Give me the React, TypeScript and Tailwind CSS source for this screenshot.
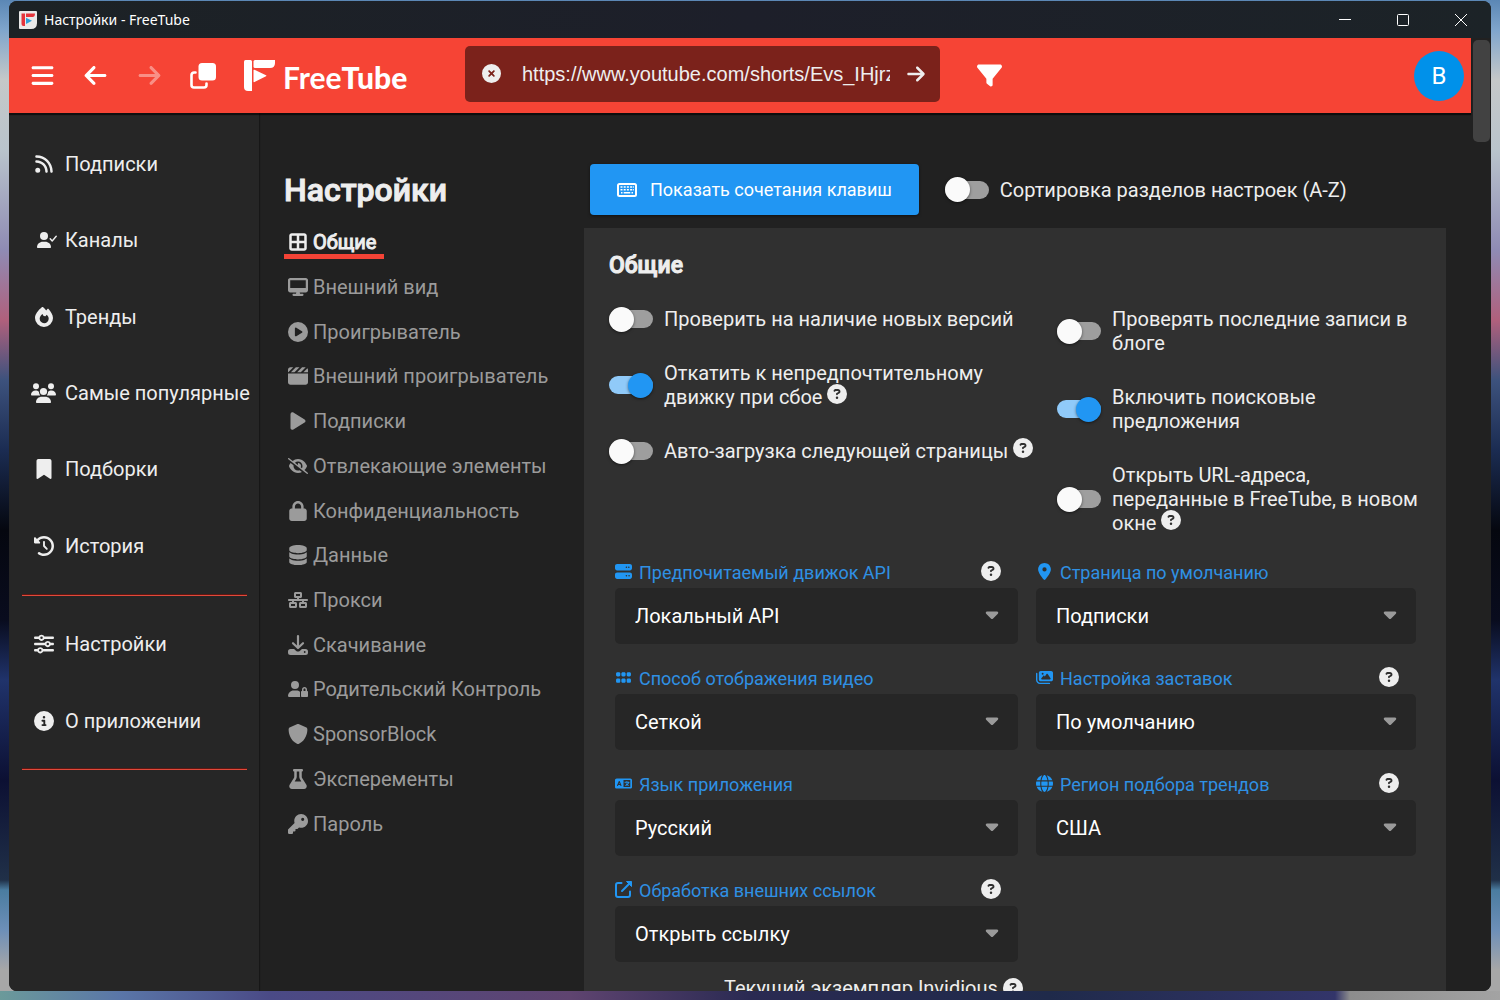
import { useState, type ReactNode } from "react";
import type { IconType } from "react-icons";
import {
  FaArrowLeft,
  FaArrowRight,
  FaBars,
  FaBookmark,
  FaBorderAll,
  FaCaretDown,
  FaCircleInfo,
  FaCirclePlay,
  FaCircleQuestion,
  FaCircleXmark,
  FaClapperboard,
  FaClockRotateLeft,
  FaDatabase,
  FaDesktop,
  FaEyeSlash,
  FaFilter,
  FaFlask,
  FaGlobe,
  FaGrip,
  FaImages,
  FaKey,
  FaLanguage,
  FaLocationDot,
  FaLock,
  FaNetworkWired,
  FaPlay,
  FaRss,
  FaServer,
  FaShield,
  FaSliders,
  FaUserLock,
} from "react-icons/fa6";

type IconProps = { className?: string };
type Icon = IconType | ((props: IconProps) => ReactNode);

function UserCheckIcon({ className }: IconProps) {
  return (
    <svg viewBox="0 0 20 16" className={className} fill="currentColor">
      <circle cx="7" cy="4" r="4" />
      <path d="M0 15.2C0 12 2.700 9.700 5.800 9.700h2.400c3.100 0 5.800 2.300 5.800 5.500 0 .5-.3.800-.8.800H.8c-.5 0-.8-.3-.8-.8z" />
      <path
        d="M13.200 6.800l2 2.200 4-4.700"
        fill="none"
        stroke="currentColor"
        strokeWidth="1.400"
        strokeLinecap="round"
        strokeLinejoin="round"
      />
    </svg>
  );
}

function FireIcon({ className }: IconProps) {
  return (
    <svg viewBox="0 0 18 20" className={className} fill="currentColor">
      <path
        fillRule="evenodd"
        d="M6.800.3c.4-.4 1-.4 1.400 0 1.100 1 2.100 2.100 3 3.300l1.200-1.500c.3-.4.9-.4 1.200 0C15.600 4.500 18 7.800 18 11a9 9 0 0 1-18 0C0 7.200 3.300 3.200 6.800.3zM4.700 11.500a4.500 4.500 0 0 0 9 .3c0-1.600-.8-3-2.200-4-.2.900-.7 1.500-1.600 1.500-1.200 0-2-1-2.200-2.300-1.600.9-3 2.700-3 4.500z"
      />
    </svg>
  );
}

function UsersIcon({ className }: IconProps) {
  return (
    <svg viewBox="0 0 25 20" className={className} fill="currentColor">
      <circle cx="5" cy="3.200" r="3" />
      <circle cx="20" cy="3.200" r="3" />
      <circle cx="12.500" cy="8.500" r="3.600" />
      <path d="M0 11.800C0 9.200 2 7.500 4.500 7.500c1.400 0 2.600.4 3.400 1.200.1 1.500.5 2.700 1.300 3.800H.8c-.5 0-.8-.2-.8-.7zM25 11.800c0-2.600-2-4.300-4.500-4.300-1.400 0-2.600.4-3.400 1.200-.1 1.500-.5 2.700-1.300 3.800h8.400c.5 0 .8-.2.800-.7z" />
      <path d="M5 19.200c0-3.300 2.700-5.400 5.700-5.400h3.600c3 0 5.700 2.100 5.700 5.400 0 .5-.3.800-.8.800H5.800c-.5 0-.8-.3-.8-.8z" />
    </svg>
  );
}

function CloneIcon({ className }: IconProps) {
  return (
    <svg viewBox="0 0 26 26" className={className} fill="currentColor">
      <rect x="8.500" y="0" width="17.500" height="17.500" rx="3.500" />
      <path
        d="M5.500 9.500H4a2.500 2.500 0 0 0-2.500 2.500v10A2.500 2.500 0 0 0 4 24.500h10a2.500 2.500 0 0 0 2.500-2.500v-1.500"
        fill="none"
        stroke="currentColor"
        strokeWidth="2.600"
        strokeLinecap="round"
      />
    </svg>
  );
}

function KeyboardIcon({ className }: IconProps) {
  return (
    <svg viewBox="0 0 20 20" className={className} fill="none" stroke="currentColor">
      <rect x="1" y="4" width="18" height="12" rx="1.500" strokeWidth="2" />
      <path d="M3.500 7h2m1.200 0h2m1.200 0h2m1.200 0h2m.7 0h1" strokeWidth="1.600" />
      <path d="M3.500 9.800h2m1.200 0h2m1.200 0h2m1.200 0h2m.7 0h1" strokeWidth="1.600" />
      <path d="M4 12.800h1.500m1.200 0h6.600m1.200 0H16" strokeWidth="1.600" />
    </svg>
  );
}

function DownloadIcon({ className }: IconProps) {
  return (
    <svg viewBox="0 0 20 20" className={className} fill="currentColor">
      <path
        d="M10 1.100v11.400M5 8.200l5 4.800 5-4.800"
        fill="none"
        stroke="currentColor"
        strokeWidth="2.200"
        strokeLinecap="round"
        strokeLinejoin="round"
      />
      <path
        fillRule="evenodd"
        d="M2.500 14h3.600l2.100 1.900c1 .9 2.600.9 3.600 0l2.100-1.900h3.600a2.500 2.500 0 0 1 2.500 2.500v1a2.500 2.500 0 0 1-2.500 2.500h-15A2.500 2.500 0 0 1 0 17.500v-1A2.500 2.500 0 0 1 2.500 14zm14.200 2.100a.9.9 0 1 0 0 1.800.9.9 0 0 0 0-1.800z"
      />
    </svg>
  );
}

function ExternalLinkIcon({ className }: IconProps) {
  return (
    <svg viewBox="0 0 17 17" className={className} fill="none" stroke="currentColor">
      <path
        d="M6.500 2H3a2 2 0 0 0-2 2v10a2 2 0 0 0 2 2h10a2 2 0 0 0 2-2v-3.500"
        strokeWidth="2"
        strokeLinecap="round"
      />
      <path d="M7 10l7-7" strokeWidth="2" strokeLinecap="round" />
      <path d="M11.500.500h5v5z" fill="currentColor" strokeLinejoin="round" />
    </svg>
  );
}

function LogoMark({ className }: IconProps) {
  return (
    <svg viewBox="0 0 31 31" className={className} fill="currentColor">
      <path d="M1.500 0H6.500Q8 0 8 1.500V31H4Q0 31 0 27V1.500Q0 0 1.500 0z" />
      <path d="M11 0h20v3q0 5-5 5H11Q9.500 8 9.500 6.500v-5Q9.500 0 11 0z" />
      <path d="M9.500 10.300q0-1 1-.5l11.500 5.500q.900.500 0 1L10.500 22q-1 .5-1-.5z" />
    </svg>
  );
}

function AppIcon() {
  return (
    <svg viewBox="0 0 18 18" className="size-[18px]">
      <path d="M1 0h16q1 0 1 1v11q0 6-6 6H1q-1 0-1-1V1q0-1 1-1z" fill="#e9e9e9" />
      <path d="M2.500 2.500H6V15H4.500q-2 0-2-2zM7 2.500h9q0 3.500-2.500 3.500H7z" fill="#e5343b" />
      <path d="M7 6.800l6 3L7 13z" fill="#2f9fd8" />
    </svg>
  );
}

const navItems: { icon: Icon; label: string; size: string }[] = [
  { icon: FaRss, label: "Подписки", size: "size-5" },
  { icon: UserCheckIcon, label: "Каналы", size: "ml-[6px] w-5 h-4" },
  { icon: FireIcon, label: "Тренды", size: "w-[18px] h-5" },
  { icon: UsersIcon, label: "Самые популярные", size: "w-[25px] h-5" },
  { icon: FaBookmark, label: "Подборки", size: "size-5" },
  { icon: FaClockRotateLeft, label: "История", size: "size-5" },
];

const navFooterItems: { icon: Icon; label: string; size: string }[] = [
  { icon: FaSliders, label: "Настройки", size: "size-5" },
  { icon: FaCircleInfo, label: "О приложении", size: "size-5" },
];

const sections: { icon: Icon; label: string }[] = [
  { icon: FaBorderAll, label: "Общие" },
  { icon: FaDesktop, label: "Внешний вид" },
  { icon: FaCirclePlay, label: "Проигрыватель" },
  { icon: FaClapperboard, label: "Внешний проигрыватель" },
  { icon: FaPlay, label: "Подписки" },
  { icon: FaEyeSlash, label: "Отвлекающие элементы" },
  { icon: FaLock, label: "Конфиденциальность" },
  { icon: FaDatabase, label: "Данные" },
  { icon: FaNetworkWired, label: "Прокси" },
  { icon: DownloadIcon, label: "Скачивание" },
  { icon: FaUserLock, label: "Родительский Контроль" },
  { icon: FaShield, label: "SponsorBlock" },
  { icon: FaFlask, label: "Эксперементы" },
  { icon: FaKey, label: "Пароль" },
];

type Toggle = { label: string; on?: boolean; help?: boolean };

const leftToggles: Toggle[] = [
  { label: "Проверить на наличие новых версий" },
  { label: "Откатить к непредпочтительному движку при сбое", on: true, help: true },
  { label: "Авто-загрузка следующей страницы", help: true },
];

const rightToggles: Toggle[] = [
  { label: "Проверять последние записи в блоге" },
  { label: "Включить поисковые предложения", on: true },
  { label: "Открыть URL-адреса, переданные в FreeTube, в новом окне", help: true },
];

const selects: { id: string; icon: Icon; label: string; value: string; help?: boolean }[] = [
  { id: "backend", icon: FaServer, label: "Предпочитаемый движок API", value: "Локальный API", help: true },
  { id: "landing", icon: FaLocationDot, label: "Страница по умолчанию", value: "Подписки" },
  { id: "view", icon: FaGrip, label: "Способ отображения видео", value: "Сеткой" },
  { id: "thumbs", icon: FaImages, label: "Настройка заставок", value: "По умолчанию", help: true },
  { id: "locale", icon: FaLanguage, label: "Язык приложения", value: "Русский" },
  { id: "region", icon: FaGlobe, label: "Регион подбора трендов", value: "США", help: true },
  { id: "links", icon: ExternalLinkIcon, label: "Обработка внешних ссылок", value: "Открыть ссылку", help: true },
];

function HelpButton() {
  return (
    <button type="button" aria-label="Подсказка" className="block text-[#eeeeee]">
      <FaCircleQuestion className="size-5" />
    </button>
  );
}

function Switch({ label, on = false, help }: Toggle) {
  const [checked, setChecked] = useState(on);

  return (
    <label className="flex items-center gap-[11px]">
      <input
        type="checkbox"
        className="peer sr-only"
        checked={checked}
        onChange={(e) => setChecked(e.target.checked)}
      />
      <span
        className={`flex h-[18px] w-11 shrink-0 items-center rounded-full ${
          checked ? "justify-end bg-[#90caf9]" : "justify-start bg-[#9e9e9e]"
        }`}
      >
        <span
          className={`size-[25px] shrink-0 rounded-full shadow-[0_1px_3px_rgba(0,0,0,0.5)] ${
            checked ? "bg-[#2196f3]" : "bg-[#fafafa]"
          }`}
        />
      </span>
      <span className="leading-6">
        {label}
        {help && (
          <>
            {" "}
            <span className="inline-flex h-4 items-center align-baseline">
              <HelpButton />
            </span>
          </>
        )}
      </span>
    </label>
  );
}

function SelectField({ id, icon: Icon, label, value, help }: (typeof selects)[number]) {
  return (
    <div>
      <div className="flex h-[30px] items-center justify-between pr-[17px]">
        <label htmlFor={id} className="flex items-center gap-[7px] text-lg leading-6 text-[#2f90e4]">
          <Icon className="mb-1 size-[17px] shrink-0 text-[#2196f3]" />
          {label}
        </label>
        {help && (
          <span className="mb-1">
            <HelpButton />
          </span>
        )}
      </div>
      <div className="relative">
        <select
          id={id}
          className="h-14 w-full appearance-none rounded-[5px] bg-[#262626] px-5 text-xl text-white outline-none"
        >
          <option>{value}</option>
        </select>
        <FaCaretDown className="pointer-events-none absolute top-4 right-4 size-5 text-[#9a9a9a]" />
      </div>
    </div>
  );
}

function NavLink({ icon: Icon, label, size }: (typeof navItems)[number]) {
  return (
    <a href="#" className="flex items-center gap-[9px] pl-[22px] whitespace-nowrap">
      <span className="flex w-[25px] shrink-0 justify-center">
        <Icon className={`shrink-0 ${size}`} />
      </span>
      {label}
    </a>
  );
}

function TitleBar() {
  return (
    <div className="flex h-[37px] shrink-0 items-center justify-between bg-gradient-to-r from-[#1c2225] via-[#1d1f2a] to-[#1c2327] pr-6 pl-[10px]">
      <div className="flex items-center gap-[7px] font-['Noto_Sans',sans-serif] text-sm text-white">
        <AppIcon />
        Настройки - FreeTube
      </div>
      <div className="flex gap-[46px] text-white">
        <button type="button" aria-label="Свернуть">
          <svg viewBox="0 0 12 12" className="size-3" fill="none" stroke="currentColor">
            <path d="M0 5.500h12" />
          </svg>
        </button>
        <button type="button" aria-label="Развернуть">
          <svg viewBox="0 0 12 12" className="size-3" fill="none" stroke="currentColor">
            <rect x=".5" y=".5" width="11" height="11" rx="1" />
          </svg>
        </button>
        <button type="button" aria-label="Закрыть">
          <svg viewBox="0 0 12 12" className="size-3" fill="none" stroke="currentColor">
            <path d="M0 0l12 12M12 0L0 12" />
          </svg>
        </button>
      </div>
    </div>
  );
}

function TopBar() {
  return (
    <header className="z-10 flex h-[75px] shrink-0 items-center bg-[#f64435] text-white shadow-[0_2px_1px_rgba(0,0,0,0.6)]">
      <div className="flex grow-[436] basis-0 items-center pl-5">
        <button type="button" aria-label="Меню" className="flex w-[26px] justify-center">
          <FaBars className="size-[25px]" />
        </button>
        <button type="button" aria-label="Назад" className="ml-[27px] flex w-[26px] justify-center">
          <FaArrowLeft className="size-[25px]" />
        </button>
        <button type="button" aria-label="Вперёд" className="ml-7 flex w-[26px] justify-center opacity-40">
          <FaArrowRight className="size-[25px]" />
        </button>
        <button type="button" aria-label="Новое окно" className="ml-7 flex w-[26px] justify-center">
          <CloneIcon className="size-[26px]" />
        </button>
        <a href="#" className="ml-7 flex items-center gap-2">
          <LogoMark className="size-[31px]" />
          <span className="pt-[2px] font-['Lato',sans-serif] text-[30px] leading-8 font-bold">
            Free<span className="font-black">Tube</span>
          </span>
        </a>
      </div>
      <div className="w-[475px] self-start pt-2">
        <div className="flex h-14 items-center rounded-[5px] bg-[#7b221b] pr-[14px] pb-px pl-[17px] text-[#eeeeee]">
          <button type="button" aria-label="Очистить">
            <FaCircleXmark className="size-[19px]" />
          </button>
          <input
            type="text"
            aria-label="Поиск"
            defaultValue="https://www.youtube.com/shorts/Evs_IHjrzK0"
            className="ml-[21px] min-w-0 flex-1 bg-transparent font-['Liberation_Sans',Arial,sans-serif] text-xl outline-none"
          />
          <button type="button" aria-label="Искать" className="ml-4">
            <FaArrowRight className="size-5" />
          </button>
        </div>
      </div>
      <div className="flex grow-[487] basis-0 items-center justify-between pr-[7px] pl-[37px]">
        <button type="button" aria-label="Фильтры">
          <FaFilter className="size-[25px]" />
        </button>
        <button
          type="button"
          aria-label="Профиль"
          className="size-[50px] rounded-full bg-[#0091ea] text-2xl leading-none"
        >
          B
        </button>
      </div>
    </header>
  );
}

export default function App() {
  return (
    <div className="h-screen [background:linear-gradient(to_right,#6b9a9a_0%,#5a76a8_8%,#4a4a86_18%,#5f4470_38%,#2a2a52_50%,#1f2a4a_70%,#33356a_89%,#8d8d8d_90%,#a3a3a3_100%)_bottom/100%_9px_no-repeat,linear-gradient(to_bottom,#5b87b5_0%,#7fa5cc_3%,#c5c8c8_8%,#b9c4cc_15%,#8f8bb4_25%,#b0607c_32%,#3d527d_38%,#1b2c52_45%,#05070f_53%,#090c1e_62%,#20336b_68%,#0c1033_78%,#203048_88%,#4a7ca0_89%,#6d8fb8_93%,#a7a7a7_97%,#a7a7a7_100%)] px-[9px] pt-px pb-[9px] font-['Roboto',sans-serif] text-xl text-[#eeeeee]">
      <div className="flex h-full flex-col overflow-hidden rounded-lg bg-[#212121]">
        <TitleBar />
        <div className="flex min-h-0 flex-1">
          <div className="flex min-w-0 flex-1 flex-col">
            <TopBar />
            <div className="flex min-h-0 flex-1">
              <nav className="w-[250px] shrink-0 bg-[#262626] pt-[13px] shadow-[1px_0_1px_rgba(0,0,0,0.3)]">
                <div className="grid h-[458px] auto-rows-fr">
                  {navItems.map((item) => (
                    <NavLink key={item.label} {...item} />
                  ))}
                </div>
                <hr className="mt-[10px] mr-3 mb-[10px] ml-[13px] h-[2px] border-t border-[#5e1712] bg-[#e0493a]" />
                <div className="grid h-[153px] auto-rows-fr">
                  {navFooterItems.map((item) => (
                    <NavLink key={item.label} {...item} />
                  ))}
                </div>
                <hr className="mt-[9px] mr-3 ml-[13px] h-[2px] border-t border-[#5e1712] bg-[#e0493a]" />
              </nav>

              <main className="flex min-w-0 flex-1 overflow-hidden px-[25px] pt-[51px]">
                <aside className="w-[300px] shrink-0">
                  <h1 className="text-[32px] leading-[52px] font-medium [-webkit-text-stroke:1px]">Настройки</h1>
                  <ul className="mt-1 grid h-[626px] auto-rows-fr">
                    {sections.map(({ icon: Icon, label }, i) => (
                      <li key={label} className="flex items-center">
                        <a
                          href="#"
                          className={`flex items-center gap-[5px] border-b-[5px] pt-[5px] pr-2 pl-1 ${
                            i === 0
                              ? "border-[#f44336] text-[#eeeeee]"
                              : "border-transparent text-[#9b9b9b]"
                          }`}
                        >
                          <Icon className="size-5 shrink-0" />
                          <span className={i === 0 ? "leading-6 [-webkit-text-stroke:1px]" : "leading-6"}>
                            {label}
                          </span>
                        </a>
                      </li>
                    ))}
                  </ul>
                </aside>

                <div className="min-w-0 flex-1">
                  <div className="flex items-center gap-[26px] pl-[6px]">
                    <button
                      type="button"
                      className="flex h-[51px] items-center gap-[13px] rounded-[4px] bg-[#2196f3] px-[27px] text-lg text-white shadow-[0_1px_3px_rgba(0,0,0,0.5)]"
                    >
                      <KeyboardIcon className="size-5" />
                      Показать сочетания клавиш
                    </button>
                    <Switch label="Сортировка разделов настроек (A-Z)" />
                  </div>

                  <section className="mt-[13px] bg-[#303030] px-[25px] pt-6 pb-12">
                    <h2 className="text-[23px] leading-7 font-medium [-webkit-text-stroke:1px]">Общие</h2>
                    <div className="mt-[27px] grid grid-cols-[448fr_364fr]">
                      <div className="flex flex-col gap-[30px]">
                        {leftToggles.map((toggle) => (
                          <Switch key={toggle.label} {...toggle} />
                        ))}
                      </div>
                      <div className="flex flex-col gap-[30px]">
                        {rightToggles.map((toggle) => (
                          <Switch key={toggle.label} {...toggle} />
                        ))}
                      </div>
                    </div>
                    <div className="mt-[23px] grid grid-cols-[403fr_380fr] gap-x-[18px] gap-y-5 pr-[5px] pl-[6px]">
                      {selects.map((field) => (
                        <SelectField key={field.id} {...field} />
                      ))}
                    </div>
                    <div className="mt-[14px] flex items-center gap-[5px] pl-[115px] leading-6">
                      Текущий экземпляр Invidious
                      <HelpButton />
                    </div>
                  </section>
                </div>
              </main>
            </div>
          </div>
          <div className="w-5 shrink-0 bg-[#212121] pt-[2px] pl-[2px]">
            <div className="h-[102px] w-[17px] rounded-[5px] bg-[#424242]" />
          </div>
        </div>
      </div>
    </div>
  );
}
